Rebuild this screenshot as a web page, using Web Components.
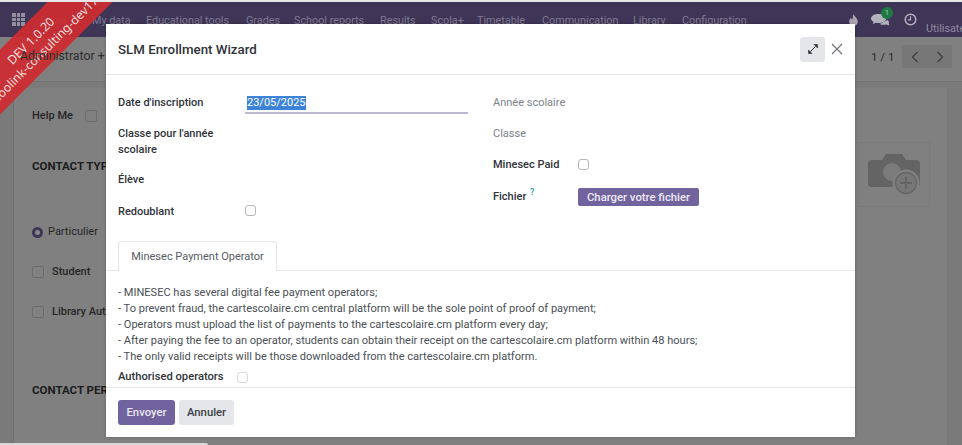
<!DOCTYPE html>
<html>
<head>
<meta charset="utf-8">
<style>
  html, body { margin: 0; height: 100%; overflow: hidden; }
  body { font-family: Roboto, "Noto Sans", sans-serif; font-size: 11px; background: #7f7f7f; }
</style>
</head>
<body>
<erp-page>
  <erp-navbar slot="nav"></erp-navbar>
  <erp-backdrop slot="back"></erp-backdrop>
  <wizard-dialog slot="dialog" title="SLM Enrollment Wizard">
    <wizard-form></wizard-form>
  </wizard-dialog>
  <dev-ribbon slot="ribbon"></dev-ribbon>
</erp-page>

<script>
class ErpPage extends HTMLElement {
  connectedCallback() {
    const shadow = this.attachShadow({ mode: 'open' });
    shadow.innerHTML = `
      <style>
        :host { display: block; position: relative; width: 962px; height: 445px; overflow: hidden; background: #7f7f7f; }
        .top { height: 2px; background: #e8e8e8; }
        .dialog { position: absolute; left: 106px; top: 24px; }
        .bar { position: absolute; left: 0; bottom: 0; width: 208px; height: 2px; background: #d8d8d8; border-radius: 0 2px 0 0; }
      </style>
      <div class="top"></div>
      <slot name="nav"></slot>
      <slot name="back"></slot>
      <div class="dialog"><slot name="dialog"></slot></div>
      <slot name="ribbon"></slot>
      <div class="bar"></div>
    `;
  }
}

class ErpNavbar extends HTMLElement {
  connectedCallback() {
    const menu = [['Scola', 40], ['My data', 92], ['Educational tools', 146], ['Grades', 246], ['School reports', 294], ['Results', 380], ['Scola+', 431], ['Timetable', 477], ['Communication', 542], ['Library', 633], ['Configuration', 682]];
    const shadow = this.attachShadow({ mode: 'open' });
    const apps = Array.from({ length: 9 }, () => '<i></i>').join('');
    // menu items are sized to the gap up to the next entry, like the real bar's measured widths
    const items = menu.map(([label, x], i) => {
      const next = menu[i + 1] ? menu[i + 1][1] : x + 70;
      return `<span style="width:${next - x}px">${label}</span>`;
    }).join('');
    shadow.innerHTML = `
      <style>
        :host { display: flex; align-items: center; height: 35px; background: #3f3557; color: #7f7a92; font-size: 10.8px; box-sizing: border-box; padding-left: 12px; }
        .apps { display: grid; grid-template-columns: repeat(3, 3.5px); gap: 1px; width: 28px; flex: none; }
        .apps i { width: 3.5px; height: 3.5px; background: #928f9f; }
        nav { display: flex; white-space: nowrap; padding-top: 1px; }
        nav span { display: block; flex: none; }
        .right { margin-left: auto; display: flex; align-items: center; color: #8f8b9f; height: 100%; }
        .right svg { display: block; }
        .fire { margin-right: 13px; }
        .chat { margin-right: 14px; position: relative; }
        .badge { position: absolute; left: 10px; top: -6px; width: 12px; height: 12px; border-radius: 50%; background: #1f7a42; color: #a9c9b6; font-size: 7px; line-height: 12px; text-align: center; }
        .clock { margin-right: 9px; }
        .user { width: 36px; overflow: hidden; padding-top: 17px; white-space: nowrap; }
      </style>
      <div class="apps">${apps}</div>
      <nav>${items}</nav>
      <div class="right">
        <svg class="fire" width="9" height="12" viewBox="0 0 10 14"><path d="M5 0C6 3 10 5 10 9a5 5 0 0 1-10 0C0 7 1 6 2 4.500C2.500 6 3 6.500 3.500 6.500C4.500 5 4 2.500 5 0Z" fill="#a9a6b2"/></svg>
        <div class="chat">
          <svg width="19" height="14" viewBox="0 0 15 14" preserveAspectRatio="none"><path d="M6 1C2.500 1 0 3 0 5.500C0 7 1 8 2 8.800L1.500 11L4 9.800C4.600 9.900 5.300 10 6 10C9.500 10 12 8 12 5.500C12 3 9.500 1 6 1Z" fill="#b4b2bd"/><path d="M13 7C14 8 14.500 9 14 10L14.500 12.500L12 11.500C10 12 8 12 7 11Z" fill="#b4b2bd"/></svg>
          <span class="badge">1</span>
        </div>
        <svg class="clock" width="13" height="13" viewBox="0 0 13 13"><circle cx="6.500" cy="6.500" r="5.300" fill="none" stroke="#b4b2bd" stroke-width="1.500"/><path d="M6.500 3.200V6.800H3.800" fill="none" stroke="#b4b2bd" stroke-width="1.200"/></svg>
        <span class="user">Utilisateur</span>
      </div>
    `;
  }
}

class ErpBackdrop extends HTMLElement {
  connectedCallback() {
    const shadow = this.attachShadow({ mode: 'open' });
    shadow.innerHTML = `
      <style>
        :host { display: block; position: relative; height: 408px; color: #262626; font-size: 11px; background: #7a7a7a; }
        .head-bg { position: absolute; left: 0; right: 0; top: 0; height: 44px; background: #808080; }
        .crumb { position: absolute; z-index: 5; left: 20px; top: 12px; font-size: 12.300px; color: #2e2e2e; white-space: nowrap; width: 86px; overflow: hidden; }
        .rule { position: absolute; left: 0; right: 0; top: 44px; height: 1px; background: #727272; }
        .sheet { position: absolute; left: 13px; width: 933px; top: 51px; bottom: 0; background: #808080; border-left: 1px solid #6f6f6f; border-right: 1px solid #767676; }
        .row { position: absolute; display: flex; align-items: center; gap: 7px; white-space: nowrap; line-height: 14px; }
        .box { width: 10px; height: 10px; border: 1px solid #6c6c6c; border-radius: 2px; }
        .radio { width: 11px; height: 11px; border-radius: 50%; box-sizing: border-box; border: 3px solid #3f3557; background: #8a8a8a; }
        .head { font-weight: 700; color: #1c1c1c; font-size: 11.500px; }
        .med { font-weight: 500; }
        .pager { position: absolute; left: 871px; top: 8px; display: flex; align-items: center; color: #2a2a2a; font-size: 11.500px; }
        .nav { display: flex; margin-left: 8px; }
        .nav b { width: 25px; height: 23px; background: #777; display: flex; align-items: center; justify-content: center; }
        .photo { position: absolute; left: 858px; top: 105px; width: 72px; height: 65px; box-sizing: border-box; border: 1px solid #7a7a7a; display: flex; align-items: flex-start; justify-content: flex-start; padding: 9px 0 0 9px; }
      </style>
      <div class="head-bg"></div>
      <span class="crumb">Administrator +</span>
      <div class="rule"></div>
      <div class="sheet"></div>
      <div class="row med" style="left:32px;top:72px">Help Me <span class="box" style="margin-left:5px"></span></div>
      <div class="row head" style="left:32px;top:122px">CONTACT TYPE</div>
      <div class="row" style="left:32px;top:188px"><span class="radio"></span><span style="margin-left:-2px">Particulier</span></div>
      <div class="row" style="left:32px;top:228px"><span class="box"></span><span class="med" style="margin-left:1px">Student</span></div>
      <div class="row" style="left:32px;top:268px"><span class="box"></span><span class="med" style="margin-left:1px">Library Auth</span></div>
      <div class="row head" style="left:32px;top:346px">CONTACT PERSON</div>
      <div class="pager">1 / 1
        <div class="nav">
          <b><svg width="8" height="12" viewBox="0 0 8 12"><path d="M6.500 1L1.500 6L6.500 11" fill="none" stroke="#3a3a3a" stroke-width="1.100"/></svg></b>
          <b><svg width="8" height="12" viewBox="0 0 8 12"><path d="M1.500 1L6.500 6L1.500 11" fill="none" stroke="#3a3a3a" stroke-width="1.100"/></svg></b>
        </div>
      </div>
      <div class="photo">
        <svg width="54" height="46" viewBox="0 0 54 46">
          <path d="M4 8H14L18 2H34L38 8H48a4 4 0 0 1 4 4V31a4 4 0 0 1-4 4H4a4 4 0 0 1-4-4V12a4 4 0 0 1 4-4Z" fill="#646464"/>
          <circle cx="24" cy="20" r="9" fill="#7b7b7b"/>
          <circle cx="38" cy="31" r="13.500" fill="#808080"/>
          <circle cx="38" cy="31" r="10.500" fill="#777" stroke="#666" stroke-width="1.300"/>
          <path d="M38 25V37M32 31H44" stroke="#636363" stroke-width="1.800"/>
        </svg>
      </div>
    `;
  }
}

class DevRibbon extends HTMLElement {
  connectedCallback() {
    const shadow = this.attachShadow({ mode: 'open' });
    shadow.innerHTML = `
      <style>
        :host { display: block; position: absolute; left: 0; top: 2px; width: 125px; height: 123px; overflow: hidden; pointer-events: none; }
        .band { position: absolute; left: -74px; top: 21px; width: 220px; height: 46px; transform: rotate(-45deg); background: rgba(206, 44, 48, 0.93); color: #f2dcdc; text-align: center; font-family: "Noto Sans", sans-serif; font-size: 12.200px; line-height: 16px; padding-top: 8px; box-sizing: border-box; white-space: nowrap; }
      </style>
      <div class="band">DEV 1.0.20<br>odoolink-consulting-dev17</div>
    `;
  }
}

class WizardDialog extends HTMLElement {
  connectedCallback() {
    const shadow = this.attachShadow({ mode: 'open' });
    shadow.innerHTML = `
      <style>
        :host { display: flex; flex-direction: column; width: 749px; height: 413px; background: #fff; color: #3a3f45; box-shadow: 0 0 3px rgba(0,0,0,.25); }
        header { height: 51px; box-sizing: border-box; flex: none; display: flex; align-items: center; padding: 0 12px; border-bottom: 1px solid #e4e6e8; }
        h4 { margin: 0; font-size: 13.300px; font-weight: 500; color: #2f3338; flex: 1; }
        .expand { width: 25px; height: 25px; border-radius: 3px; background: #e4e6e9; display: flex; align-items: center; justify-content: center; margin-right: 6px; }
        .close { width: 12px; height: 12px; display: block; }
        main { flex: 1; min-height: 0; }
        footer { height: 50px; flex: none; border-top: 1px solid #e4e6e8; display: flex; align-items: center; gap: 4px; padding: 0 12px; box-sizing: border-box; }
        .btn { height: 25px; display: flex; align-items: center; justify-content: center; border-radius: 3px; font-size: 11.300px; font-weight: 500; }
        .primary { width: 57px; background: #71639e; color: #e9e6f1; }
        .secondary { width: 55px; background: #e4e6e9; color: #3a3f45; }
      </style>
      <header>
        <h4>${this.getAttribute('title')}</h4>
        <span class="expand"><svg width="10" height="10" viewBox="0 0 10 10"><path d="M6 .5H9.500V4ZM.5 6V9.500H4Z" fill="#2f3338" stroke="#2f3338" stroke-width=".6"/><path d="M7.500 2.500L2.500 7.500" stroke="#2f3338" stroke-width="1"/></svg></span>
        <svg class="close" viewBox="0 0 12 12"><path d="M1 1L11 11M11 1L1 11" stroke="#6a6f76" stroke-width="1.100" fill="none"/></svg>
      </header>
      <main><slot></slot></main>
      <footer><span class="btn primary">Envoyer</span><span class="btn secondary">Annuler</span></footer>
    `;
  }
}

class WizardForm extends HTMLElement {
  connectedCallback() {
    const shadow = this.attachShadow({ mode: 'open' });
    shadow.innerHTML = `
      <style>
        :host { display: block; font-size: 11px; color: #3a3f45; }
        .cols { display: grid; grid-template-columns: 375px 1fr; padding: 20px 12px 0; height: 166px; box-sizing: border-box; }
        .rows { display: grid; grid-template-columns: 127px 223px; grid-auto-rows: min-content; align-items: start; }
        .rows.r { grid-template-columns: 85px 1fr; }
        .l { font-weight: 500; color: #2f3338; line-height: 16px; }
        .muted { font-weight: 400; color: #7c8288; }
        .date { border-bottom: 2px solid #bcbad0; height: 19px; box-sizing: border-box; color: #fff; padding-left: 2px; }
        .date span { background: #3d84d8; line-height: 14px; display: inline-block; margin-top: 1px; }
        .box { display: block; width: 9px; height: 9px; border: 1px solid #b4b8bd; border-radius: 3px; }
        sup { color: #2a9ab0; font-size: 9px; line-height: 0; margin-left: 1px; }
        .up { height: 18px; width: 121px; margin-top: -1px; background: #71639e; color: #ece9f3; border-radius: 2px; font-weight: 500; font-size: 11.300px; display: flex; align-items: center; justify-content: center; }
        .tabs { height: 30px; box-sizing: border-box; border-bottom: 1px solid #e4e6e8; padding-left: 12px; display: flex; }
        .tab { height: 30px; width: 159px; box-sizing: border-box; background: #fff; border: 1px solid #e4e6e8; border-bottom: 0; border-radius: 3px 3px 0 0; display: flex; align-items: center; justify-content: center; color: #565b62; }
        .note { padding: 14px 12px 0; font-size: 11.060px; line-height: 16px; color: #4a4f55; white-space: nowrap; }
        .auth { display: flex; align-items: center; padding: 4px 12px 0; font-weight: 500; color: #2f3338; line-height: 16px; font-size: 11.200px; }
        .auth b { font-weight: inherit; width: 119px; }
        .auth .box { border-color: #d8dadc; }
      </style>
      <div class="cols">
        <div class="rows">
          <div class="l" style="height:31px">Date d'inscription</div>
          <div><div class="date"><span>23/05/2025</span></div></div>
          <div class="l" style="height:46px;padding-right:20px">Classe pour l'année scolaire</div><div></div>
          <div class="l" style="height:32px">Élève</div><div></div>
          <div class="l">Redoublant</div><div><span class="box" style="margin-top:1px"></span></div>
        </div>
        <div class="rows r">
          <div class="l muted" style="height:31px">Année scolaire</div><div></div>
          <div class="l muted" style="height:31px">Classe</div><div></div>
          <div class="l" style="height:32px">Minesec Paid</div><div><span class="box" style="margin-top:2px"></span></div>
          <div class="l">Fichier <sup>?</sup></div><div><span class="up">Charger votre fichier</span></div>
        </div>
      </div>
      <div class="tabs"><div class="tab">Minesec Payment Operator</div></div>
      <div class="note">
        - MINESEC has several digital fee payment operators;<br>
        - To prevent fraud, the cartescolaire.cm central platform will be the sole point of proof of payment;<br>
        - Operators must upload the list of payments to the cartescolaire.cm platform every day;<br>
        - After paying the fee to an operator, students can obtain their receipt on the cartescolaire.cm platform within 48 hours;<br>
        - The only valid receipts will be those downloaded from the cartescolaire.cm platform.
      </div>
      <div class="auth"><b>Authorised operators</b><span class="box"></span></div>
    `;
  }
}

customElements.define('erp-page', ErpPage);
customElements.define('erp-navbar', ErpNavbar);
customElements.define('erp-backdrop', ErpBackdrop);
customElements.define('dev-ribbon', DevRibbon);
customElements.define('wizard-dialog', WizardDialog);
customElements.define('wizard-form', WizardForm);
</script>
</body>
</html>
